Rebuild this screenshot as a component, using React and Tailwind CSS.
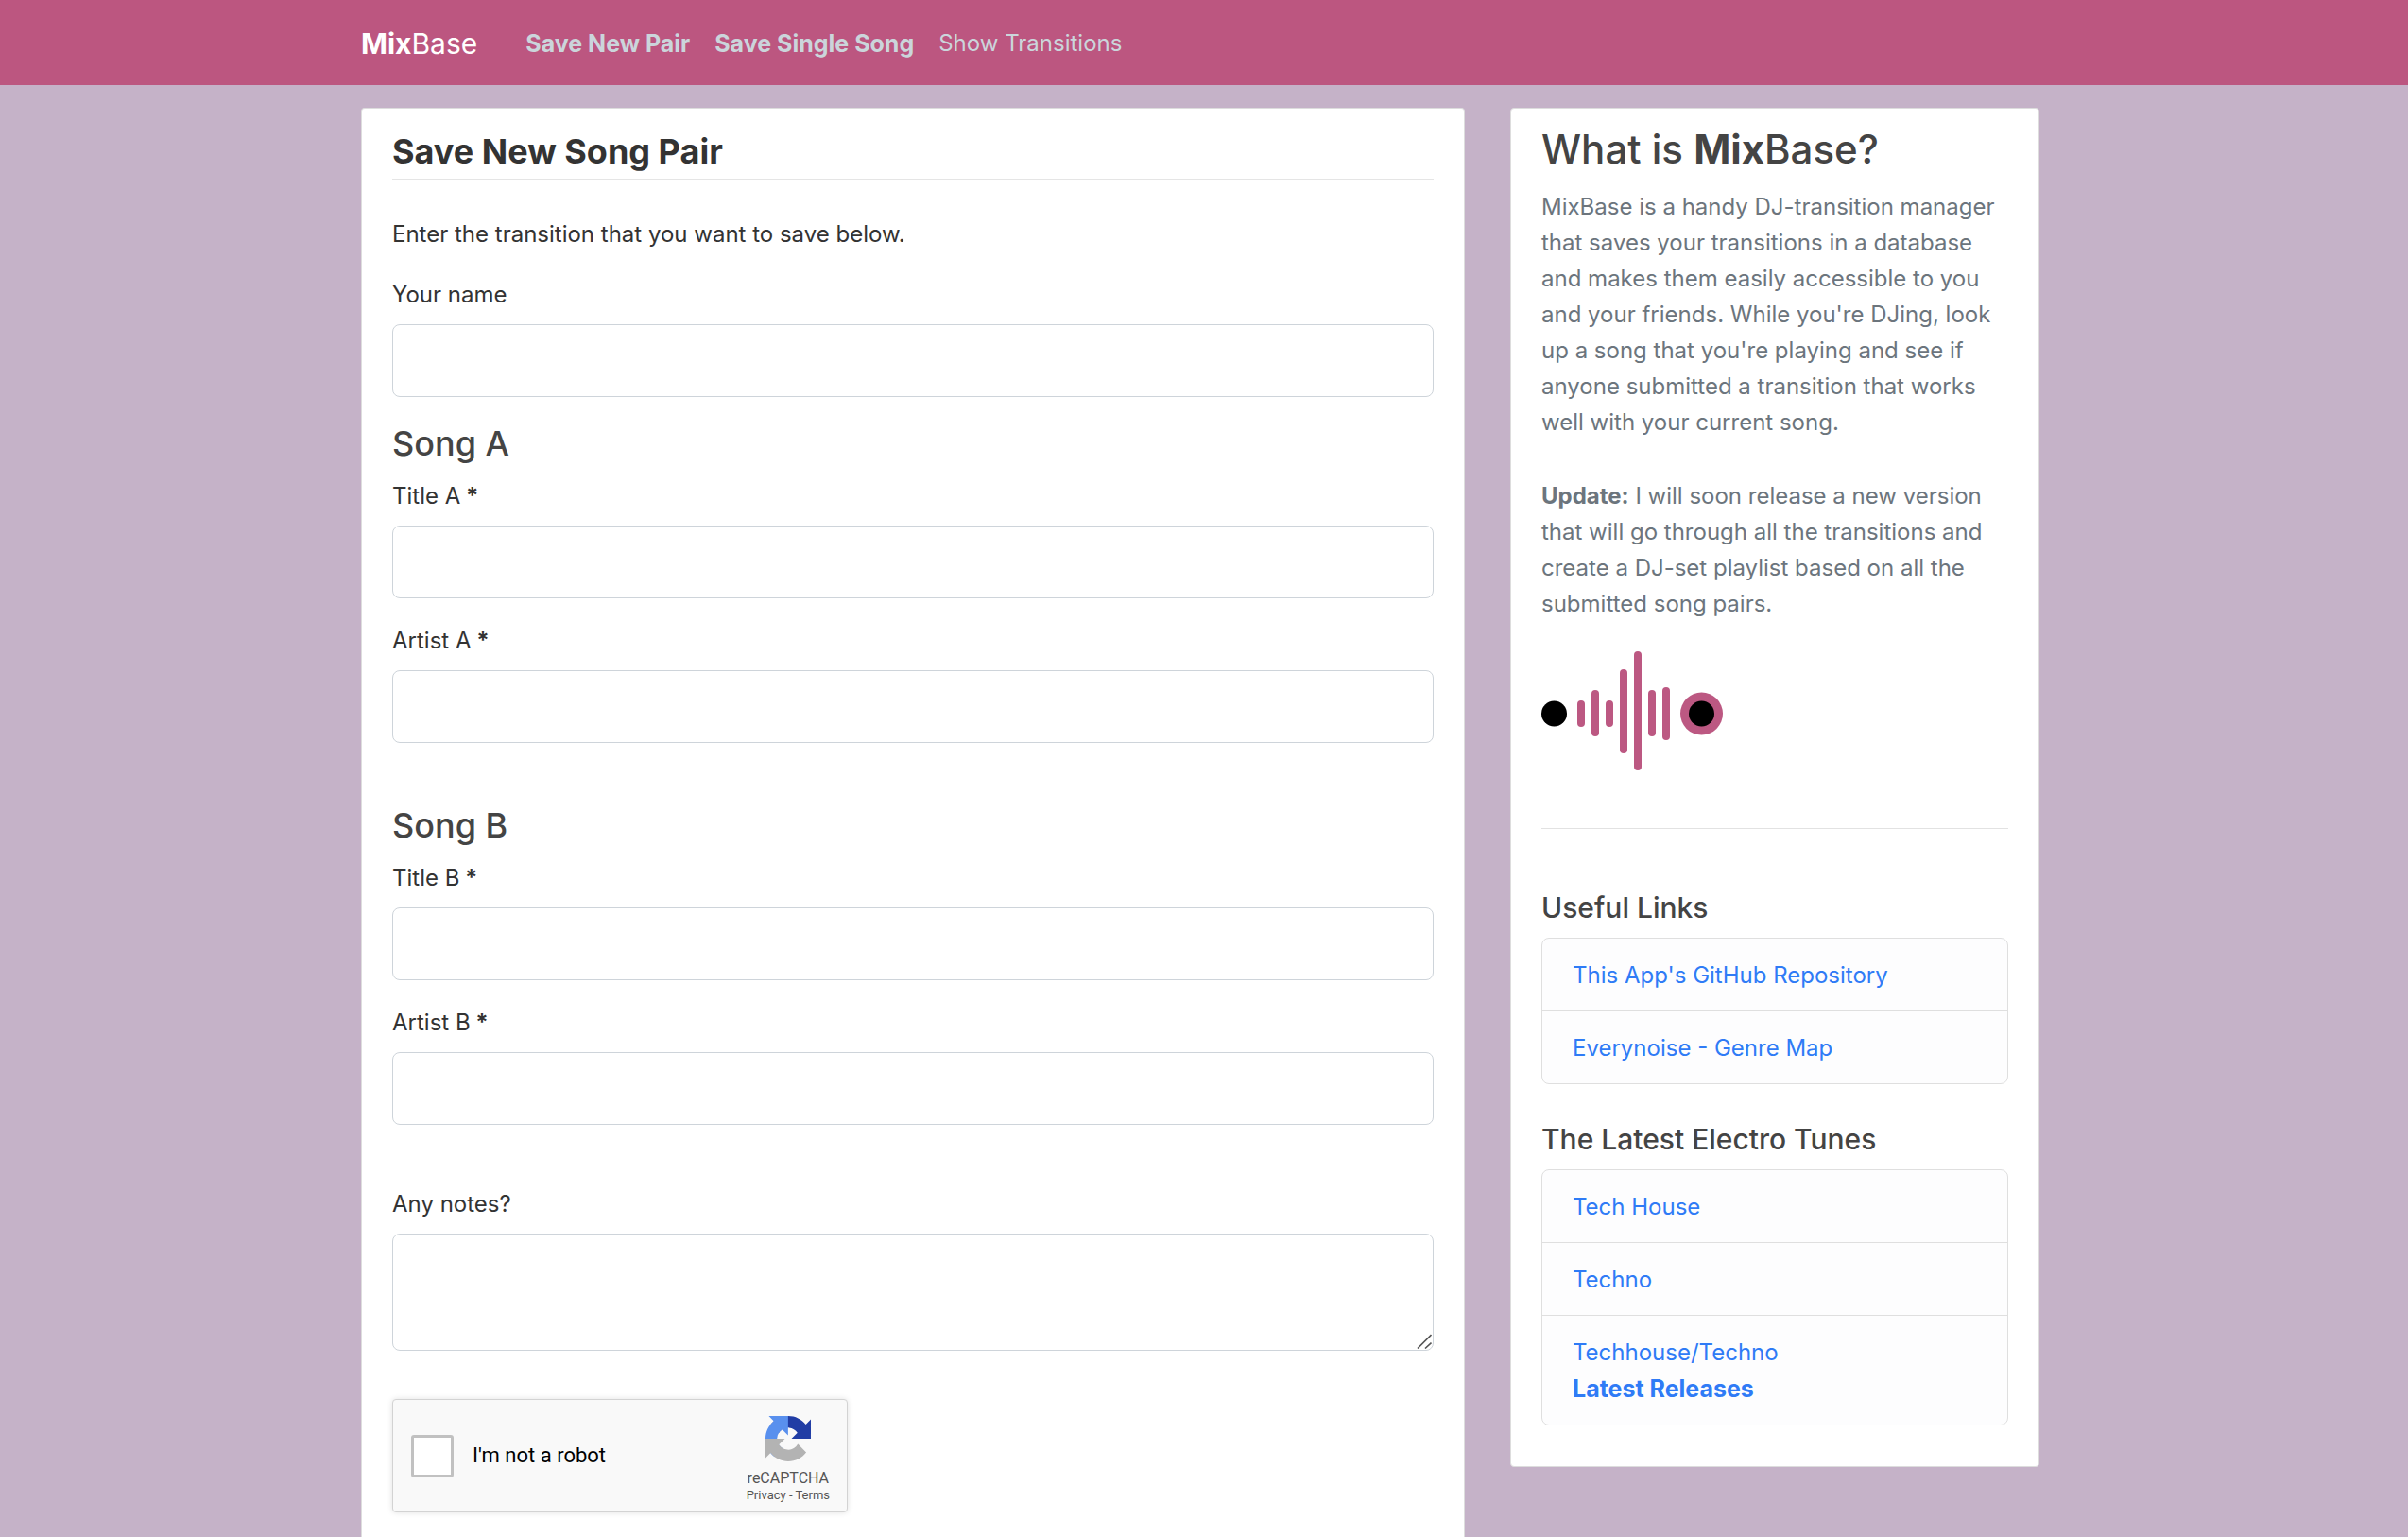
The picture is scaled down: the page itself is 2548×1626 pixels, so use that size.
const NAV = [
  { label: "Save New Pair", bold: true },
  { label: "Save Single Song", bold: true },
  { label: "Show Transitions", bold: false },
];

const BARS = [
  { x: 42, top: 52, bottom: 80 },
  { x: 57, top: 41, bottom: 90 },
  { x: 72, top: 52, bottom: 80 },
  { x: 87, top: 19, bottom: 108 },
  { x: 102, top: 0, bottom: 126 },
  { x: 117, top: 41, bottom: 90 },
  { x: 132, top: 38, bottom: 94 },
];

function Field({ id, label, required }) {
  return (
    <div>
      <label htmlFor={id} className="mb-[11px] block leading-10">
        {label}
        {required && <span className="font-bold"> *</span>}
      </label>
      <input
        id={id}
        type="text"
        required={required}
        className="block h-[77px] w-full rounded-lg border border-[#ced4da] bg-white px-6 outline-none"
      />
    </div>
  );
}

function Song({ letter }) {
  return (
    <fieldset className="min-w-0">
      <legend className="mb-[13px] text-4xl leading-[46px] font-medium text-[#444]">Song {letter}</legend>
      <div className="flex flex-col gap-[25px]">
        <Field id={"title-" + letter} label={"Title " + letter} required />
        <Field id={"artist-" + letter} label={"Artist " + letter} required />
      </div>
    </fieldset>
  );
}

function Notes() {
  return (
    <div>
      <label htmlFor="notes" className="mb-[11px] block leading-10">
        Any notes?
      </label>
      <div className="relative">
        <textarea
          id="notes"
          className="block h-[124px] w-full resize-none rounded-lg border border-[#ced4da] bg-white px-6 py-3 outline-none"
        />
        <svg
          viewBox="0 0 16 16"
          className="pointer-events-none absolute right-[2px] bottom-[2px] size-4"
          fill="none"
          stroke="#555"
          strokeWidth="1.6"
          aria-hidden="true"
        >
          <path d="M1 15.5L15.5 1M9 15.5L15.5 9.5" />
        </svg>
      </div>
    </div>
  );
}

function RecaptchaLogo() {
  return (
    <svg viewBox="0 0 64 64" className="size-12" aria-hidden="true">
      <path
        fill="#213da5"
        d="M64 31.955l-.033-1.37V4.687l-7.16 7.16C50.948 4.674 42.033.093 32.05.093c-10.4 0-19.622 4.96-25.458 12.64l11.736 11.86a15.55 15.55 0 0 1 4.754-5.334c2.05-1.6 4.952-2.906 8.968-2.906.485 0 .86.057 1.135.163 4.976.393 9.288 3.14 11.828 7.124l-8.307 8.307L64 31.953"
      />
      <path
        fill="#5990ee"
        d="M31.862.094l-1.37.033H4.594l7.16 7.16C4.58 13.147 0 22.06 0 32.046c0 10.4 4.96 19.622 12.64 25.458L24.5 45.768a15.55 15.55 0 0 1-5.334-4.754c-1.6-2.05-2.906-4.952-2.906-8.968 0-.485.057-.86.163-1.135.393-4.976 3.14-9.288 7.124-11.828l8.307 8.307L31.86.095"
      />
      <path
        fill="#b3b3b3"
        d="M.001 32.045l.033 1.37v25.898l7.16-7.16c5.86 7.173 14.774 11.754 24.76 11.754 10.4 0 19.622-4.96 25.458-12.64l-11.736-11.86a15.55 15.55 0 0 1-4.754 5.334c-2.05 1.6-4.952 2.906-8.968 2.906-.485 0-.86-.057-1.135-.163-4.976-.393-9.288-3.14-11.828-7.124l8.307-8.307c-10.522.04-22.4.066-27.295-.005"
      />
    </svg>
  );
}

function Recaptcha() {
  return (
    <div className="flex h-[120px] w-[482px] items-center rounded-[4px] border border-[#d3d3d3] bg-[#f9f9f9] pr-[18px] pl-[19px] font-[Roboto,sans-serif] shadow-[0_0_6px_rgba(0,0,0,0.12)]">
      <input
        id="robot"
        type="checkbox"
        className="size-[45px] appearance-none rounded-[3px] border-[3px] border-[#c1c1c1] bg-white"
      />
      <label htmlFor="robot" className="ml-5 flex-1 text-[22px] leading-7 text-black">
        I'm not a robot
      </label>
      <div className="flex flex-col items-center pt-2 text-[#555]">
        <RecaptchaLogo />
        <div className="mt-2 text-base leading-5">reCAPTCHA</div>
        <div className="text-[13px] leading-4">
          <a href="#privacy">Privacy</a> - <a href="#terms">Terms</a>
        </div>
      </div>
    </div>
  );
}

function LinkList({ title, children }) {
  return (
    <section>
      <h2 className="mb-[13px] text-[30px] leading-[38px] font-medium text-[#444]">{title}</h2>
      <ul className="divide-y divide-[#dfdfdf] rounded-lg border border-[#dfdfdf] bg-[#fdfdfe] text-[#2f7bf6]">
        {children}
      </ul>
    </section>
  );
}

function LinkItem({ children }) {
  return (
    <li className="px-8 pt-5 pb-[18px]">
      <a href="#link">{children}</a>
    </li>
  );
}

function Waveform() {
  return (
    <svg viewBox="0 0 192 127" className="h-[127px] w-48" role="img" aria-label="Sound wave">
      <circle cx="13.5" cy="66" r="13.5" fill="#000" />
      {BARS.map((b) => (
        <rect key={b.x} x={b.x - 4} y={b.top} width="8" height={b.bottom - b.top} rx="4" fill="#bc5882" />
      ))}
      <circle cx="169.5" cy="66" r="22.5" fill="#bc5882" />
      <circle cx="169.5" cy="66" r="13.5" fill="#000" />
    </svg>
  );
}

export default function App() {
  return (
    <div className="flex min-h-screen flex-col bg-[#c5b2c8] font-[Inter,sans-serif] text-2xl leading-[38px] text-[#333]">
      <header className="bg-[#bc5680]">
        <nav className="mx-auto flex h-[90px] w-full max-w-[1832px] items-center pt-[2px] pr-8 pl-6">
          <a href="#home" className="mr-[51px] text-[30px] text-white">
            <strong>Mix</strong>Base
          </a>
          <ul className="flex gap-[26px] text-[#cbd5db]">
            {NAV.map((n) => (
              <li key={n.label}>
                <a href="#nav" className={n.bold ? "text-[25px] font-bold" : ""}>
                  {n.label}
                </a>
              </li>
            ))}
          </ul>
        </nav>
      </header>

      <div className="mx-auto grid w-full max-w-[1832px] flex-1 grid-cols-[minmax(0,1168fr)_minmax(0,560fr)] gap-12 pt-6 pr-8 pl-6">
        <main className="rounded-t-[4px] border border-b-0 border-[#ddd] bg-white px-8 pt-4 pb-6">
          <form>
            <h1 className="mb-[38px] border-b border-[#e5e5e5] text-4xl leading-[58px] font-bold">Save New Song Pair</h1>
            <p className="mb-6 leading-10">Enter the transition that you want to save below.</p>
            <div className="mb-[26px]">
              <Field id="name" label="Your name" />
            </div>
            <div className="flex flex-col gap-16">
              <Song letter="A" />
              <Song letter="B" />
              <Notes />
            </div>
            <div className="mt-[51px]">
              <Recaptcha />
            </div>
          </form>
        </main>

        <aside className="self-start rounded-[4px] border border-[#ddd] bg-white px-8 pt-4 pb-[43px]">
          <h1 className="mb-[15px] text-[42px] leading-[54px] font-medium text-[#444]">
            What is <strong>Mix</strong>Base?
          </h1>
          <div className="flex flex-col gap-10 text-[#6c757d]">
            <p>
              MixBase is a handy DJ-transition manager that saves your transitions in a database and makes them easily
              accessible to you and your friends. While you're DJing, look up a song that you're playing and see if
              anyone submitted a transition that works well with your current song.
            </p>
            <p>
              <strong>Update:</strong> I will soon release a new version that will go through all the transitions and
              create a DJ-set playlist based on all the submitted song pairs.
            </p>
          </div>
          <div className="mt-[31px] border-b border-[#e2e2e2] pb-[60px]">
            <Waveform />
          </div>
          <div className="mt-16 flex flex-col gap-[39px]">
            <LinkList title="Useful Links">
              <LinkItem>This App's GitHub Repository</LinkItem>
              <LinkItem>Everynoise - Genre Map</LinkItem>
            </LinkList>
            <LinkList title="The Latest Electro Tunes">
              <LinkItem>Tech House</LinkItem>
              <LinkItem>Techno</LinkItem>
              <LinkItem>
                Techhouse/Techno
                <br />
                <strong className="text-[25px]">Latest Releases</strong>
              </LinkItem>
            </LinkList>
          </div>
        </aside>
      </div>
    </div>
  );
}
